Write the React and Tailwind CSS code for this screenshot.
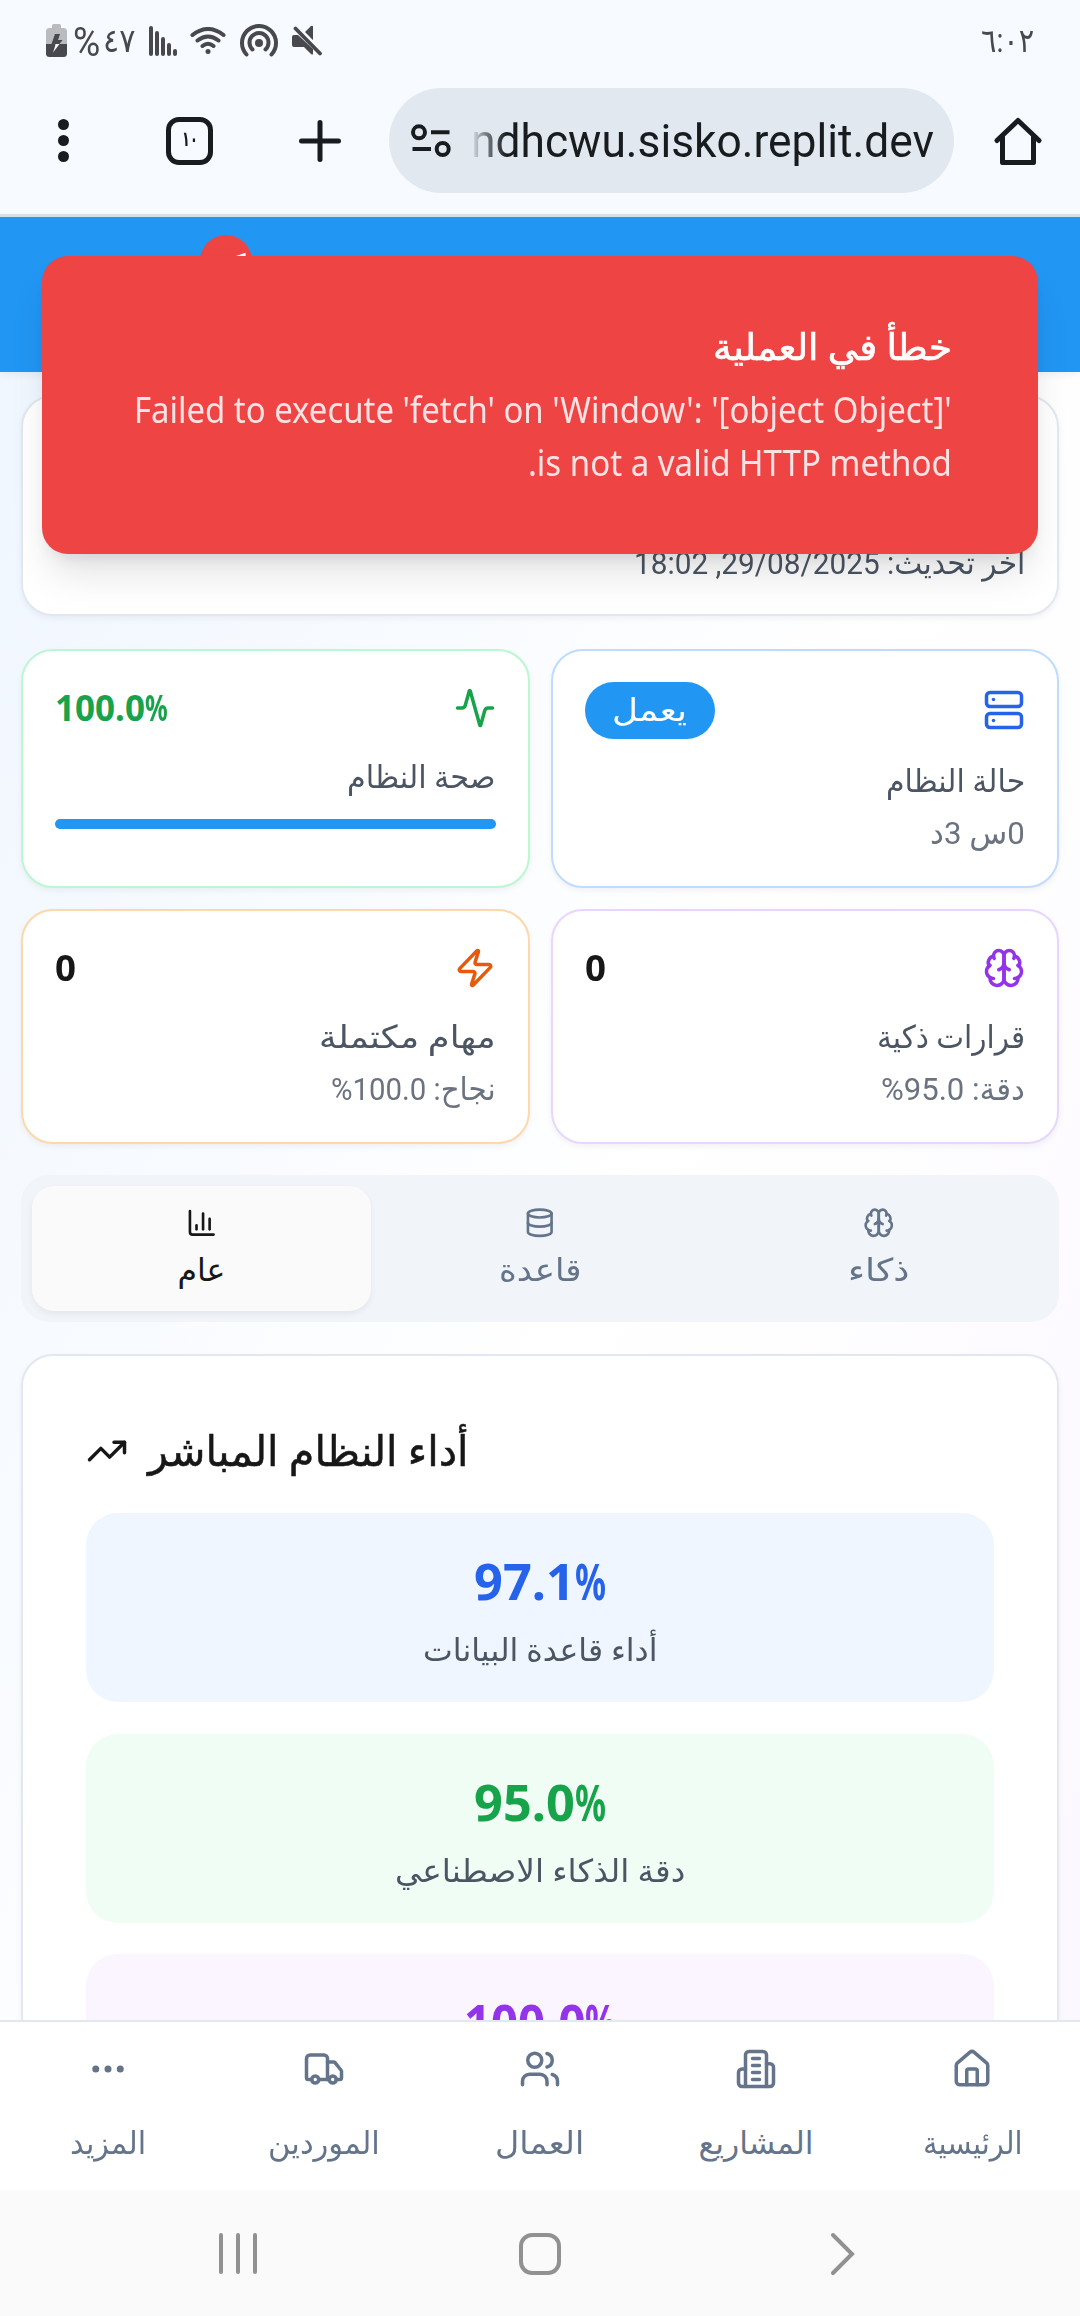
import React, { useLayoutEffect, useRef, useState } from 'react';
import {
  Activity,
  ChartColumn,
  Database,
  Ellipsis,
  House,
  Server,
  TrendingUp,
  Truck,
  Users,
  Zap,
} from 'lucide-react';

/* Single line of text, condensed or widened to fill a given width. */
function Fit({ w, children, className = '', dir = 'rtl' }) {
  const ref = useRef(null);
  const [scale, setScale] = useState(1);
  useLayoutEffect(() => {
    const natural = ref.current.offsetWidth;
    if (natural) setScale(w / natural);
  }, [w, children]);
  return (
    <span dir={dir} className={`block shrink-0 whitespace-nowrap ${className}`} style={{ width: w }}>
      <span
        ref={ref}
        className={dir === 'rtl' ? 'inline-block origin-right' : 'inline-block origin-left'}
        style={{ transform: `scaleX(${scale})` }}
      >
        {children}
      </span>
    </span>
  );
}

/* Bold number followed by a narrow percent sign. */
function Percent({ value, w, signW, className }) {
  return (
    <div dir="ltr" className={`flex font-['Noto_Sans'] ${className}`}>
      <Fit w={w} dir="ltr" className="font-bold">{value}</Fit>
      <Fit w={signW} dir="ltr" className="font-bold">%</Fit>
    </div>
  );
}

function Brain({ size, className }) {
  return (
    <svg width={size} height={size} viewBox="0 0 24 24" fill="none" stroke="currentColor" strokeWidth="2" strokeLinecap="round" strokeLinejoin="round" className={className}>
      <path d="M12 5a3 3 0 1 0-5.997.125 4 4 0 0 0-2.526 5.77 4 4 0 0 0 .556 6.588A4 4 0 1 0 12 18Z" />
      <path d="M12 5a3 3 0 1 1 5.997.125 4 4 0 0 1 2.526 5.77 4 4 0 0 1-.556 6.588A4 4 0 1 1 12 18Z" />
      <path d="M15 13a4.5 4.5 0 0 1-3-4 4.5 4.5 0 0 1-3 4" />
      <path d="M17.599 6.5a3 3 0 0 0 .399-1.375" />
      <path d="M6.003 5.125A3 3 0 0 0 6.401 6.5" />
      <path d="M3.477 10.896a4 4 0 0 1 .585-.396" />
      <path d="M19.938 10.5a4 4 0 0 1 .585.396" />
      <path d="M6 18a4 4 0 0 1-1.967-.516" />
      <path d="M19.967 17.484A4 4 0 0 1 18 18" />
    </svg>
  );
}

function Building({ size, className }) {
  return (
    <svg width={size} height={size} viewBox="0 0 24 24" fill="none" stroke="currentColor" strokeWidth="2" strokeLinecap="round" strokeLinejoin="round" className={className}>
      <path d="M6 22V4a2 2 0 0 1 2-2h8a2 2 0 0 1 2 2v18Z" />
      <path d="M6 12H4a2 2 0 0 0-2 2v6a2 2 0 0 0 2 2h2" />
      <path d="M18 9h2a2 2 0 0 1 2 2v9a2 2 0 0 1-2 2h-2" />
      <path d="M10 6h4M10 10h4M10 14h4M10 18h4" />
    </svg>
  );
}

function StatusBar() {
  return (
    <div dir="ltr" className="flex h-[81px] items-center pl-[46px] pr-[46px] text-[#47494c]">
      <svg width="21" height="34" viewBox="0 0 21 34" className="shrink-0">
        <path d="M6 1.5Q6 0 7.500 0h6Q15 0 15 1.500V4h2.500Q21 4 21 7.500V20H0V7.500Q0 4 3.500 4H6z" fill="#b9bbbe" />
        <path d="M0 20h21v9.500q0 3.500-3.500 3.500h-14Q0 33 0 29.500z" fill="#47494c" />
        <path d="M9 10h5l-2 6h4.500L13.500 20H5.500z" fill="#47494c" />
        <path d="M9.500 20h4L7 28.500l2-6z" fill="#f7faff" />
      </svg>
      <div className="ml-[6px] flex h-[44px] w-[62px] items-center gap-[3px]">
        <Fit w={27} dir="ltr" className="pt-[4px] text-[40px] leading-[44px]">%</Fit>
        <Fit w={32} dir="ltr" className="text-[33px] leading-[44px]">٤٧</Fit>
      </div>
      <svg width="28" height="30" viewBox="0 0 28 30" className="ml-[14px] shrink-0" fill="none" stroke="currentColor" strokeWidth="4" strokeLinecap="round">
        <path d="M2 2v26M8 7v21M14 13v15M20 19v9M26 25v3" />
      </svg>
      <svg width="36" height="27" viewBox="0 0 36 27" className="ml-[13px] shrink-0" fill="none" stroke="currentColor" strokeWidth="4" strokeLinecap="round">
        <path d="M2.500 8q15.500-12 31 0M7.500 13.500q10.500-8 21 0M12.500 19q5.500-4.500 11 0" />
        <circle cx="18" cy="24.500" r="2.500" fill="currentColor" stroke="none" />
      </svg>
      <svg width="38" height="33" viewBox="0 0 38 33" className="ml-[14px] shrink-0" fill="none" stroke="currentColor" strokeWidth="4" strokeLinecap="round">
        <path d="M6.500 30.500a17 17 0 1 1 25 0" />
        <path d="M12.500 25.500a9.500 9.500 0 1 1 13 0" />
        <circle cx="19" cy="19" r="4" fill="currentColor" stroke="none" />
      </svg>
      <svg width="30" height="31" viewBox="0 0 30 31" className="ml-[14px] shrink-0">
        <path d="M0 12q0-2 2-2h4L21 24v4.500q0 2-2 .500l-7-7H2q-2 0-2-2zM12.500 7.500 19 1q2-1 2 1v14z" fill="currentColor" />
        <path d="M6 2l24 24.500" stroke="#f7faff" strokeWidth="3" />
        <path d="M3.500 3.500l24.500 25" stroke="currentColor" strokeWidth="3.800" strokeLinecap="round" />
      </svg>
      <Fit w={53} dir="ltr" className="ml-auto text-[33px] leading-[44px]">٦:٠٢</Fit>
    </div>
  );
}

function BrowserBar() {
  return (
    <div dir="ltr" className="mb-[14px] flex h-[119px] items-center text-[#191c1f]">
      <div className="ml-[57px] flex w-[12px] flex-col items-center gap-[5px]">
        <i className="size-[11px] rounded-full bg-current" />
        <i className="size-[11px] rounded-full bg-current" />
        <i className="size-[11px] rounded-full bg-current" />
      </div>
      <div className="ml-[97px] flex h-[48px] w-[47px] items-center justify-center rounded-[13px] border-[5px] border-current">
        <Fit w={16} dir="ltr" className="mb-[3px] text-[21px] font-bold leading-[24px]">١٠</Fit>
      </div>
      <svg width="42" height="42" viewBox="0 0 42 42" className="ml-[86px] shrink-0" stroke="currentColor" strokeWidth="5" strokeLinecap="round">
        <path d="M21 2.500v37M2.500 21h37" />
      </svg>
      <div className="ml-[48px] flex h-[105px] w-[565px] items-center rounded-full bg-[#e2e8f0] pl-[22px]">
        <svg width="40" height="34" viewBox="0 0 40 34" className="shrink-0" fill="none" stroke="currentColor" strokeWidth="4">
          <circle cx="8" cy="8.300" r="6" />
          <path d="M20 8.300h18.500M1.500 25h18.500" />
          <circle cx="31.700" cy="25" r="6" />
        </svg>
        <Fit w={463} dir="ltr" className="ml-[20px] text-[47px] leading-[60px] [mask-image:linear-gradient(to_right,transparent_0,rgba(0,0,0,0.5)_14px,black_36px)]">
          ndhcwu.sisko.replit.dev
        </Fit>
      </div>
      <svg width="48" height="48" viewBox="0 0 48 48" className="ml-[40px] shrink-0" fill="none" stroke="currentColor" strokeWidth="5" strokeLinecap="round" strokeLinejoin="round">
        <path d="M3 23.500 24 3.500l21 20M8.500 20v25.500h31V20" />
      </svg>
    </div>
  );
}

function StatCard({ border, icon, value, rowClass = 'h-[52px]', children }) {
  return (
    <div className={`rounded-[32px] border-2 bg-white px-[32px] pt-[31px] shadow-[0_3px_6px_rgba(0,0,0,0.05)] ${border}`}>
      <div className={`flex items-center justify-between ${rowClass}`}>
        {icon}
        {value}
      </div>
      <div className="mt-[18px] text-[31.5px] leading-[52px]">{children}</div>
    </div>
  );
}

const tabs = [
  { label: 'ذكاء', w: 61, Icon: Brain },
  { label: 'قاعدة', w: 83, Icon: Database },
  { label: 'عام', w: 48, Icon: ChartColumn, active: true },
];

const metrics = [
  { value: '97.1', vw: 101, label: 'أداء قاعدة البيانات', lw: 234, bg: 'bg-blue-50', fg: 'text-[#2563eb]' },
  { value: '95.0', vw: 101, label: 'دقة الذكاء الاصطناعي', lw: 290, bg: 'bg-[#f0fdf4]', fg: 'text-[#16a34a]' },
  { value: '100.0', vw: 121, bg: 'bg-[#faf5ff]', fg: 'text-[#9333ea]' },
];

const navItems = [
  { label: 'الرئيسية', w: 100, Icon: House },
  { label: 'المشاريع', w: 115, Icon: Building },
  { label: 'العمال', w: 89, Icon: Users },
  { label: 'الموردين', w: 112, Icon: Truck },
  { label: 'المزيد', w: 76, Icon: Ellipsis },
];

export default function App() {
  return (
    <div dir="rtl" className="relative flex h-[2316px] w-[1080px] flex-col overflow-hidden bg-[#f7faff] font-['Roboto','DejaVu_Sans',sans-serif]">
      <header className="h-[217px] shrink-0 border-b-[3px] border-[#d3e2e9]">
        <StatusBar />
        <BrowserBar />
      </header>

      <div className="h-[1803px] shrink-0 overflow-hidden bg-linear-to-br from-[#eff6ff] via-white to-[#faf5ff] bg-[length:100%_2400px] bg-no-repeat">
        <div className="relative h-[155px] bg-[#2196f3] shadow-[0_3px_8px_rgba(0,0,0,0.06)]">
          <div dir="ltr" className="absolute left-[200px] top-[18px] size-[52px] rounded-full bg-[#ef4444] pl-[33px] pt-[13px] text-[32px] font-bold leading-[32px] text-white">
            1
          </div>
        </div>

        <main className="flex flex-col px-[21px] pt-[23px]">
          <section className="flex h-[221px] items-end rounded-[32px] border-2 border-[#e2e8f0] bg-white px-[32px] pb-[29px] shadow-[0_3px_6px_rgba(0,0,0,0.05)]">
            <Fit w={391} className="text-[31.5px] leading-[42px] text-[#4b5563]">آخر تحديث: 29/08/2025, 18:02</Fit>
          </section>

          <section className="mt-[33px] grid grid-cols-2 grid-rows-[239px_235px] gap-[21px]">
            <StatCard
              border="border-[#bfdbfe]"
              rowClass="h-[56px]"
              icon={<Server size={42} className="text-[#2563eb]" />}
              value={
                <div className="flex h-[57px] w-[130px] items-center justify-center rounded-full bg-[#2196f3] text-white">
                  <Fit w={75} className="pt-px text-[31.5px] leading-[52px]">يعمل</Fit>
                </div>
              }
            >
              <Fit w={139} className="text-[#4b5563]">حالة النظام</Fit>
              <Fit w={95} className="text-[#6b7280]">0س 3د</Fit>
            </StatCard>

            <StatCard
              border="border-[#bbf7d0]"
              icon={<Activity size={42} className="text-[#16a34a]" />}
              value={<Percent value="100.0" w={90} signW={23} className="text-[35px] leading-[50px] text-[#16a34a]" />}
            >
              <Fit w={149} className="text-[#4b5563]">صحة النظام</Fit>
              <div className="mt-[15px] h-[10px] rounded-full bg-[#2196f3]" />
            </StatCard>

            <StatCard
              border="border-[#e9d5ff]"
              icon={<Brain size={42} className="text-[#9333ea]" />}
              value={<Fit w={21} dir="ltr" className="font-['Noto_Sans'] text-[35px] font-bold leading-[50px] text-[#171717]">0</Fit>}
            >
              <Fit w={148} className="text-[#4b5563]">قرارات ذكية</Fit>
              <Fit w={144} className="text-[#6b7280]">دقة: 95.0%</Fit>
            </StatCard>

            <StatCard
              border="border-[#fed7aa]"
              icon={<Zap size={42} className="text-[#ea580c]" />}
              value={<Fit w={21} dir="ltr" className="font-['Noto_Sans'] text-[35px] font-bold leading-[50px] text-[#171717]">0</Fit>}
            >
              <Fit w={177} className="text-[#4b5563]">مهام مكتملة</Fit>
              <Fit w={165} className="text-[#6b7280]">نجاح: 100.0%</Fit>
            </StatCard>
          </section>

          <section className="mt-[31px] grid h-[147px] grid-cols-3 rounded-[28px] bg-[#f1f5f9] p-[11px]">
            {tabs.map(({ label, w, Icon, active }) => (
              <div
                key={label}
                className={
                  active
                    ? 'flex flex-col items-center rounded-[22px] bg-[#fafafa] pt-[21px] text-[#171717] shadow-[0_3px_6px_rgba(0,0,0,0.06)]'
                    : 'flex flex-col items-center pt-[21px] text-[#64748b]'
                }
              >
                <Icon size={31.5} />
                <Fit w={w} className="mt-[11px] text-[31.5px] leading-[42px]">{label}</Fit>
              </div>
            ))}
          </section>

          <section className="mt-[32px] h-[760px] rounded-[32px] border-2 border-[#e2e8f0] bg-white px-[63px] pt-[65px] shadow-[0_3px_6px_rgba(0,0,0,0.05)]">
            <div dir="ltr" className="flex h-[60px] items-center gap-[20px] text-[#171717]">
              <TrendingUp size={42} />
              <Fit w={321} className="pt-[2px] text-[42px] leading-[60px] [-webkit-text-stroke:0.5px]">أداء النظام المباشر</Fit>
            </div>
            <div className="mt-[32px] flex flex-col gap-[31.5px]">
              {metrics.map((m) => (
                <div key={m.value} className={`flex h-[189px] flex-col items-center rounded-[32px] pt-[34px] ${m.bg}`}>
                  <Percent value={m.value} w={m.vw} signW={31} className={`h-[72px] text-[50px] leading-[68px] ${m.fg}`} />
                  {m.label && (
                    <Fit w={m.lw} className="mt-[8px] text-[31.5px] leading-[47px] text-[#4b5563]">{m.label}</Fit>
                  )}
                </div>
              ))}
            </div>
          </section>
        </main>
      </div>

      <nav className="grid h-[170px] shrink-0 grid-cols-5 border-t-2 border-[#e2e8f0] bg-white text-[#64748b]">
        {navItems.map(({ label, w, Icon }) => (
          <div key={label} className="flex flex-col items-center pt-[26px]">
            <Icon size={42} />
            <Fit w={w} className="mt-[33px] text-[31.5px] leading-[42px]">{label}</Fit>
          </div>
        ))}
      </nav>

      <footer dir="ltr" className="flex h-[126px] shrink-0 items-center bg-[#fafafa] pt-px text-[#919191]">
        <div className="ml-[219px] flex h-[41px] w-[38px] justify-between">
          <i className="w-[4px] rounded-full bg-current" />
          <i className="w-[4px] rounded-full bg-current" />
          <i className="w-[4px] rounded-full bg-current" />
        </div>
        <div className="ml-[262px] h-[42px] w-[42px] rounded-[13px] border-4 border-current" />
        <svg width="26" height="44" viewBox="0 0 26 44" className="ml-[269px]" fill="none" stroke="currentColor" strokeWidth="4" strokeLinecap="round">
          <path d="M3 3l19 19L3 41" />
        </svg>
      </footer>

      <div role="alert" className="absolute left-[42px] top-[256px] h-[298px] w-[996px] rounded-[26px] bg-[#ef4444] px-[86px] pt-[66px] text-white shadow-[0_26px_40px_-8px_rgba(0,0,0,0.12),0_10px_16px_-8px_rgba(0,0,0,0.1)]">
        <Fit w={239} className="text-[36.75px] leading-[52px] [-webkit-text-stroke:0.7px]">خطأ في العملية</Fit>
        <div className="mt-[9px] font-['Noto_Sans'] text-[36px] leading-[53px] opacity-85">
          <Fit w={818} dir="ltr">Failed to execute 'fetch' on 'Window': '[object Object]'</Fit>
          <Fit w={424}>is not a valid HTTP method.</Fit>
        </div>
      </div>
    </div>
  );
}
